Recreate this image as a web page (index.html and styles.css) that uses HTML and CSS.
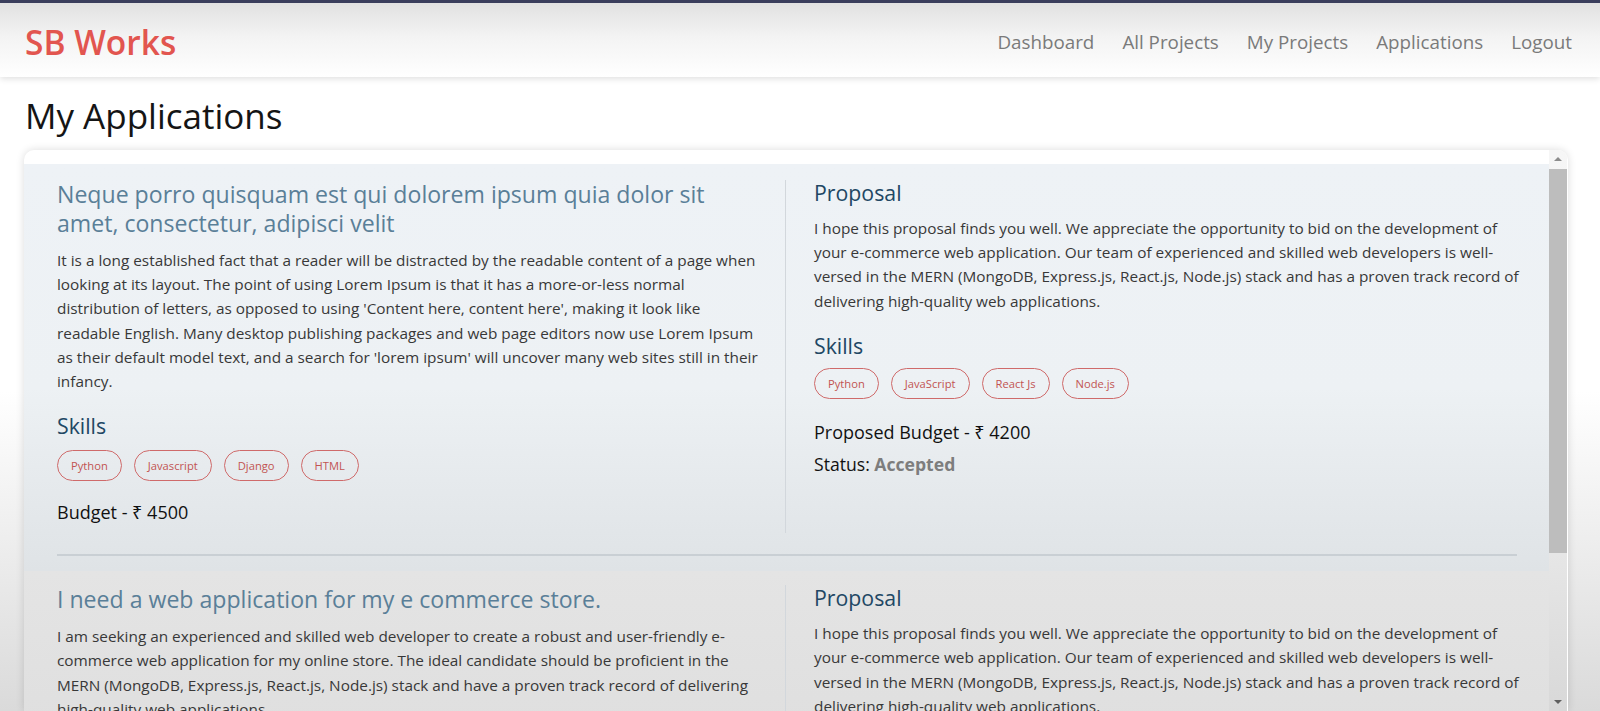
FILE: index.html
```html
<!DOCTYPE html>
<html lang="en">
<head>
<meta charset="utf-8">
<title>SB Works - My Applications</title>
<link rel="stylesheet" href="styles.css">
</head>
<body>
<header class="navbar">
  <div class="brand">SB Works</div>
  <nav class="nav-links">
    <a href="#">Dashboard</a>
    <a href="#">All Projects</a>
    <a href="#">My Projects</a>
    <a href="#">Applications</a>
    <a href="#">Logout</a>
  </nav>
</header>

<main class="page">
  <h2 class="page-title">My Applications</h2>
  <div class="app-card">
    <div class="app-list">
      <section class="app-item app-item-first">
        <div class="app-row">
          <div class="app-col app-project">
            <h3 class="project-title">Neque porro quisquam est qui dolorem ipsum quia dolor sit amet, consectetur, adipisci velit</h3>
            <p class="body-text">It is a long established fact that a reader will be distracted by the readable content of a page when looking at its layout. The point of using Lorem Ipsum is that it has a more-or-less normal distribution of letters, as opposed to using 'Content here, content here', making it look like readable English. Many desktop publishing packages and web page editors now use Lorem Ipsum as their default model text, and a search for 'lorem ipsum' will uncover many web sites still in their infancy.</p>
            <h4 class="section-title">Skills</h4>
            <div class="chips">
              <span class="chip">Python</span>
              <span class="chip">Javascript</span>
              <span class="chip">Django</span>
              <span class="chip">HTML</span>
            </div>
            <div class="budget">Budget - ₹ 4500</div>
          </div>
          <div class="app-col app-proposal">
            <h4 class="section-title">Proposal</h4>
            <p class="body-text">I hope this proposal finds you well. We appreciate the opportunity to bid on the development of your e-commerce web application. Our team of experienced and skilled web developers is well-versed in the MERN (MongoDB, Express.js, React.js, Node.js) stack and has a proven track record of delivering high-quality web applications.</p>
            <h4 class="section-title skills-right">Skills</h4>
            <div class="chips">
              <span class="chip">Python</span>
              <span class="chip">JavaScript</span>
              <span class="chip">React Js</span>
              <span class="chip">Node.js</span>
            </div>
            <div class="budget">Proposed Budget - ₹ 4200</div>
            <div class="status">Status: <span class="status-value">Accepted</span></div>
          </div>
        </div>
        <hr class="divider">
      </section>

      <section class="app-item app-item-second">
        <div class="app-row">
          <div class="app-col app-project">
            <h3 class="project-title">I need a web application for my e commerce store.</h3>
            <p class="body-text">I am seeking an experienced and skilled web developer to create a robust and user-friendly e-commerce web application for my online store. The ideal candidate should be proficient in the MERN (MongoDB, Express.js, React.js, Node.js) stack and have a proven track record of delivering high-quality web applications.</p>
            <h4 class="section-title">Skills</h4>
            <div class="chips">
              <span class="chip">MongoDB</span>
              <span class="chip">Express</span>
              <span class="chip">React</span>
              <span class="chip">Node.js</span>
            </div>
            <div class="budget">Budget - ₹ 5000</div>
          </div>
          <div class="app-col app-proposal">
            <h4 class="section-title">Proposal</h4>
            <p class="body-text">I hope this proposal finds you well. We appreciate the opportunity to bid on the development of your e-commerce web application. Our team of experienced and skilled web developers is well-versed in the MERN (MongoDB, Express.js, React.js, Node.js) stack and has a proven track record of delivering high-quality web applications.</p>
            <h4 class="section-title skills-right">Skills</h4>
            <div class="chips">
              <span class="chip">MongoDB</span>
              <span class="chip">Express</span>
              <span class="chip">React</span>
              <span class="chip">Node.js</span>
            </div>
            <div class="budget">Proposed Budget - ₹ 4800</div>
            <div class="status">Status: <span class="status-value">Pending</span></div>
          </div>
        </div>
        <hr class="divider">
      </section>
    </div>
    <div class="scrollbar" aria-hidden="true">
      <div class="scroll-btn"><span class="arrow-up"></span></div>
      <div class="scroll-track"><div class="scroll-thumb"></div></div>
      <div class="scroll-btn"><span class="arrow-down"></span></div>
    </div>
  </div>
</main>
</body>
</html>
```

FILE: styles.css
```css
* { box-sizing: border-box; }

html, body { height: 100%; }

body {
  margin: 0;
  overflow: hidden;
  font-family: "Open Sans", "Noto Sans", sans-serif;
  color: #222;
  background: linear-gradient(to bottom, #ffffff 0%, #ffffff 55%, #dadada 100%);
}

.navbar {
  height: 77px;
  border-top: 3px solid #3a3e5c;
  display: flex;
  align-items: center;
  justify-content: space-between;
  padding: 3px 28px 0 25px;
  background: linear-gradient(to bottom, #e1e1e1 0%, #f3f3f3 45%, #ffffff 100%);
  box-shadow: 0 2px 6px rgba(0, 0, 0, 0.12);
  position: relative;
  z-index: 2;
}

.brand {
  color: #e2554f;
  font-size: 33.5px;
  font-weight: 600;
}

.nav-links {
  display: flex;
  gap: 28px;
}

.nav-links a {
  color: #7a7a7a;
  text-decoration: none;
  font-size: 18.8px;
}

.page {
  padding: 0 32px 0 24px;
}

.page-title {
  margin: 17px 0 0 1px;
  font-size: 35px;
  font-weight: 500;
  line-height: 44px;
  color: #151515;
}

.app-card {
  margin-top: 12px;
  height: calc(100vh - 150px);
  display: flex;
  background: #ffffff;
  border-radius: 10px 10px 0 0;
  box-shadow: 0 0 8px rgba(0, 0, 0, 0.14);
  overflow: hidden;
}

.app-list {
  flex: 1;
  min-width: 0;
  overflow: hidden;
  padding-top: 14px;
}

.scrollbar {
  width: 18px;
  margin-right: 1px;
  display: flex;
  flex-direction: column;
  background: linear-gradient(to bottom, #f6f6f6 0%, #ececec 60%, #d8d8d8 100%);
}

.scroll-btn {
  height: 18px;
  display: flex;
  align-items: center;
  justify-content: center;
}

.arrow-up {
  width: 0;
  height: 0;
  border-left: 4px solid transparent;
  border-right: 4px solid transparent;
  border-bottom: 4px solid #8c8c8c;
}

.arrow-down {
  width: 0;
  height: 0;
  border-left: 4px solid transparent;
  border-right: 4px solid transparent;
  border-top: 4px solid #606060;
}

.scroll-track {
  flex: 1;
  padding-top: 1px;
}

.scroll-thumb {
  height: 384px;
  background: #bdbdbd;
}

.app-item {
  padding: 16px 32px 15px 33px;
}

.app-item-first {
  background: linear-gradient(to bottom, #eef2f6 0%, #edf1f4 55%, #dfe3e6 100%);
}

.app-item-second {
  background: linear-gradient(to bottom, #e4e4e4 0%, #d9d9d9 100%);
  padding-top: 14px;
}

.app-row {
  display: grid;
  grid-template-columns: 728px 1fr;
}

.app-project {
  padding-right: 23px;
  padding-bottom: 8px;
}

.app-proposal {
  border-left: 1px solid #d2d7dc;
  padding-left: 28px;
}

.project-title {
  margin: 0 0 10px;
  font-size: 23.1px;
  line-height: 29px;
  font-weight: 500;
  color: #5a7f98;
}

.body-text {
  margin: 0 0 20px;
  font-size: 15.35px;
  line-height: 24.2px;
  color: #383838;
}

.app-proposal .body-text {
  margin-right: -14px;
}

.section-title {
  margin: 0 0 11px;
  font-size: 21.3px;
  line-height: 26px;
  font-weight: 500;
  color: #214764;
}

.app-proposal .section-title { margin-bottom: 10px; }
.app-proposal .skills-right { margin-bottom: 9px; }

.chips {
  display: flex;
  flex-wrap: wrap;
  gap: 12px;
  margin-bottom: 18px;
}

.app-proposal .chips { margin-bottom: 20px; }

.chip {
  display: inline-flex;
  align-items: center;
  height: 31px;
  padding: 0 13px;
  border: 1px solid #cf6a6a;
  border-radius: 16px;
  font-size: 11.2px;
  color: #c25452;
}

.budget {
  font-size: 18px;
  line-height: 26px;
  color: #111;
}

.status {
  margin-top: 6px;
  font-size: 17.6px;
  line-height: 26px;
  color: #111;
}

.status-value {
  font-weight: 700;
  color: #7d7d7d;
}

.divider {
  margin: 21px 0 0;
  border: 0;
  border-top: 2px solid #c9cfd4;
}
```
